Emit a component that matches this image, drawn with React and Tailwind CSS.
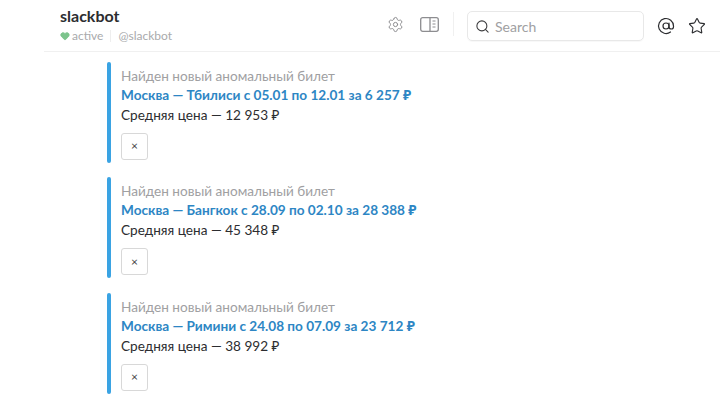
import React from 'react'
import { Settings, Search, AtSign, Star, Heart } from 'lucide-react'

const font = "font-['Lato','Open_Sans','Noto_Sans',sans-serif]"

const tickets = [
  { route: 'Москва — Тбилиси с 05.01 по 12.01 за 6 257 ₽', avg: 'Средняя цена — 12 953 ₽' },
  { route: 'Москва — Бангкок с 28.09 по 02.10 за 28 388 ₽', avg: 'Средняя цена — 45 348 ₽' },
  { route: 'Москва — Римини с 24.08 по 07.09 за 23 712 ₽', avg: 'Средняя цена — 38 992 ₽' },
]

const Ticket = ({ ticket }) => (
  <div className="flex h-[101px] mb-[14.5px]">
    <div className="w-1 h-full rounded-sm bg-[#3aa3e3]"></div>
    <div className="pl-[10px] pt-[4px] flex flex-col items-start">
      <div className="text-[13.6px] leading-[20px] text-[#a0a0a2]">Найден новый аномальный билет</div>
      <div className="text-[13.6px] leading-[19px] font-bold text-[#2d86c4]">{ticket.route}</div>
      <div className="text-[13.6px] leading-[20px] text-[#2c2d30]">{ticket.avg}</div>
      <div className="mt-[8px] w-[27px] h-[27px] rounded-[3px] border border-[#d8d8d8] flex items-center justify-center text-[12px] text-[#444]">×</div>
    </div>
  </div>
)

const App = () => {
  return (
    <div className={`w-[720px] h-[400px] overflow-hidden bg-white ${font}`}>
      <header className="h-[52px] ml-[44px] border-b border-[#f0f0f0] flex items-start">
        <div className="ml-4 pt-[6px] w-[323px]">
          <div className="text-[16px] leading-[20px] font-bold text-[#2c2d30]">slackbot</div>
          <div className="flex items-center mt-[2px] text-[12px] leading-[16px] text-[#a9aaac]">
            <Heart size={10} className="text-[#7cc48c] fill-[#7cc48c] mr-[2px]" />
            <span>active</span>
            <span className="w-px h-3 bg-[#eeeeee] mx-[7px]"></span>
            <span>@slackbot</span>
          </div>
        </div>
        <div className="flex items-center h-[46px] pt-[6px]">
          <Settings size={17} strokeWidth={1.4} className="ml-[4px] text-[#8d8d90] -mt-1" />
          <svg width="19" height="15" viewBox="0 0 19 15" fill="none" className="ml-[16px] -mt-1 text-[#8d8d90]" stroke="currentColor" strokeWidth="1.3">
            <rect x="0.7" y="0.7" width="17.6" height="13.6" rx="2" />
            <path d="M10 1v13" />
            <path d="M12.5 4h3M12.5 7h3M12.5 10h3" strokeWidth="1" />
          </svg>
          <span className="w-px h-6 bg-[#f0f0f0] ml-[14px] -mt-1"></span>
          <div className="ml-[13px] w-[177px] h-[30px] rounded-[5px] border border-[#e8e8e8] flex items-center pl-[7px] shadow-[0_1px_1px_rgba(0,0,0,0.03)]">
            <Search size={15} strokeWidth={1.7} className="text-[#3a3a3c]" />
            <span className="ml-[5px] text-[14px] text-[#a0a0a2]">Search</span>
          </div>
          <AtSign size={18} strokeWidth={1.6} className="ml-[13px] text-[#2c2d30]" />
          <Star size={18} strokeWidth={1.5} className="ml-[13px] text-[#2c2d30]" />
        </div>
      </header>
      <main className="pl-[107px] pt-[9.9px]">
        {tickets.map((t) => (
          <Ticket key={t.route} ticket={t} />
        ))}
      </main>
    </div>
  )
}

export default App
